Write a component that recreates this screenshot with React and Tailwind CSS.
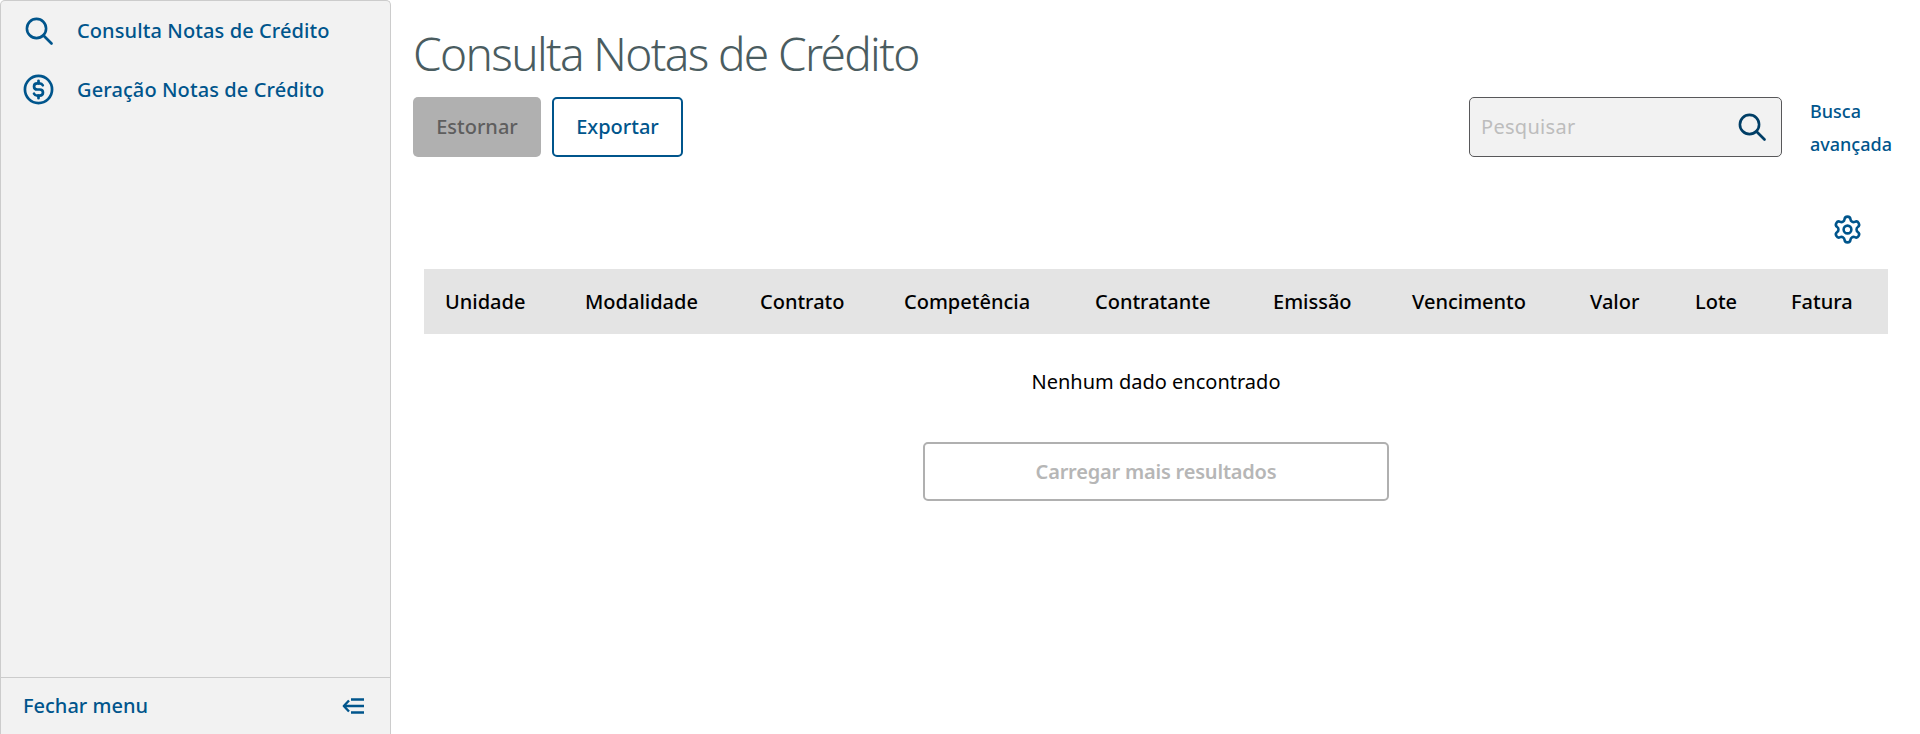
import { Settings } from 'lucide-react';

const columns = [
  { label: 'Unidade', width: 'w-[140px]' },
  { label: 'Modalidade', width: 'w-[175px]' },
  { label: 'Contrato', width: 'w-[144px]' },
  { label: 'Competência', width: 'w-[191px]' },
  { label: 'Contratante', width: 'w-[178px]' },
  { label: 'Emissão', width: 'w-[139px]' },
  { label: 'Vencimento', width: 'w-[178px]' },
  { label: 'Valor', width: 'w-[105px]' },
  { label: 'Lote', width: 'w-[96px]' },
  { label: 'Fatura', width: 'w-[118px]' },
];

function SearchIcon({ color }) {
  return (
    <svg width="28" height="28" viewBox="0 0 28 28" fill="none" stroke={color} strokeWidth="2.600" strokeLinecap="round">
      <circle cx="11.500" cy="11.500" r="9.600" />
      <path d="M18.500 18.500 26.500 26.500" />
    </svg>
  );
}

function DollarIcon() {
  return (
    <svg width="31" height="31" viewBox="0 0 32 32" fill="none" stroke="#00558c" strokeWidth="2.800" strokeLinecap="round" strokeLinejoin="round">
      <circle cx="16" cy="16" r="14" />
      <path d="M20.400 11.600c-.6-1.200-1.900-2-3.400-2h-2.200c-2 0-3.400 1.400-3.400 3.200s1.400 3.200 3.400 3.200h2.400c2 0 3.400 1.400 3.400 3.200s-1.400 3.200-3.400 3.200h-2.400c-1.500 0-2.800-.8-3.400-2" />
      <path d="M16 7v2.600M16 22.400v2.600" />
    </svg>
  );
}

function CollapseIcon() {
  return (
    <svg width="22" height="18" viewBox="0 0 22 18" fill="none" stroke="#00558c" strokeWidth="2.400" strokeLinejoin="round">
      <path d="M7 3.500 1.800 9 7 14.500" />
      <path d="M2 9h20M9 2.500h13M9 15.500h13" />
    </svg>
  );
}

export default function App() {
  return (
    <div className="flex h-[734px] bg-white font-['Noto_Sans','Lato',sans-serif] overflow-hidden">
      <aside className="w-[391px] shrink-0 flex flex-col bg-[#f2f2f2] border border-b-0 border-[#cccccc] rounded-t-[5px]">
        <nav className="flex-1 text-[20px] font-medium tracking-[0.1px] text-[#00558c]">
          <a className="flex items-center h-[59px] pl-[24px] gap-[24px]">
            <SearchIcon color="#00558c" />
            <span>Consulta Notas de Crédito</span>
          </a>
          <a className="flex items-center h-[59px] pl-[22px] gap-[23px]">
            <DollarIcon />
            <span>Geração Notas de Crédito</span>
          </a>
        </nav>
        <div className="h-[57px] border-t border-[#cccccc] flex items-center justify-between pl-[22px] pr-[26px] text-[20px] font-medium text-[#00558c]">
          <span>Fechar menu</span>
          <CollapseIcon />
        </div>
      </aside>

      <main className="flex-1 min-w-0 pl-[22px] pr-[18px]">
        <h1 className="pt-[23px] h-[97px] text-[46px] leading-[60px] font-light tracking-[-1.650px] text-[#4a5c60]">Consulta Notas de Crédito</h1>

        <div className="flex items-start">
          <button className="h-[60px] w-[128px] rounded-[5px] bg-[#b0b0b0] text-[20px] font-medium text-[#5e5e5e]">Estornar</button>
          <button className="ml-[11px] h-[60px] w-[131px] rounded-[5px] border-2 border-[#00558c] bg-white text-[20px] font-medium text-[#00558c]">Exportar</button>
          <div className="ml-auto w-[313px] h-[60px] flex items-center justify-between pl-[11px] pr-[15px] rounded-[5px] border border-[#58585a] bg-[#f2f2f2]">
            <span className="text-[20px] tracking-[0.3px] text-[#bdbdbd]">Pesquisar</span>
            <SearchIcon color="#003e66" />
          </div>
          <a className="ml-[28px] w-[92px] -mt-[2px] text-[18px] leading-[33px] font-medium text-[#00558c]">Busca avançada</a>
        </div>

        <div className="mt-[53px] flex justify-end pr-[39px]">
          <Settings size={31} strokeWidth={2} color="#00558c" />
        </div>

        <table className="mt-[24px] ml-[11px] w-[1464px] table-fixed border-collapse">
          <thead>
            <tr className="h-[65px] bg-[#e4e4e4]">
              {columns.map((col) => (
                <th key={col.label} className={`${col.width} pl-[21px] text-left text-[20px] font-medium text-black whitespace-nowrap`}>{col.label}</th>
              ))}
            </tr>
          </thead>
          <tbody>
            <tr className="h-[94px]">
              <td colSpan={10} className="pt-[2px] text-center text-[20px] text-black">Nenhum dado encontrado</td>
            </tr>
          </tbody>
        </table>

        <div className="mt-[14px] ml-[11px] w-[1464px] flex justify-center">
          <button className="w-[466px] h-[59px] rounded-[5px] border-2 border-[#b0b0b0] bg-white text-[20px] font-semibold tracking-[-0.2px] text-[#b6b6b6]">Carregar mais resultados</button>
        </div>
      </main>
    </div>
  );
}
